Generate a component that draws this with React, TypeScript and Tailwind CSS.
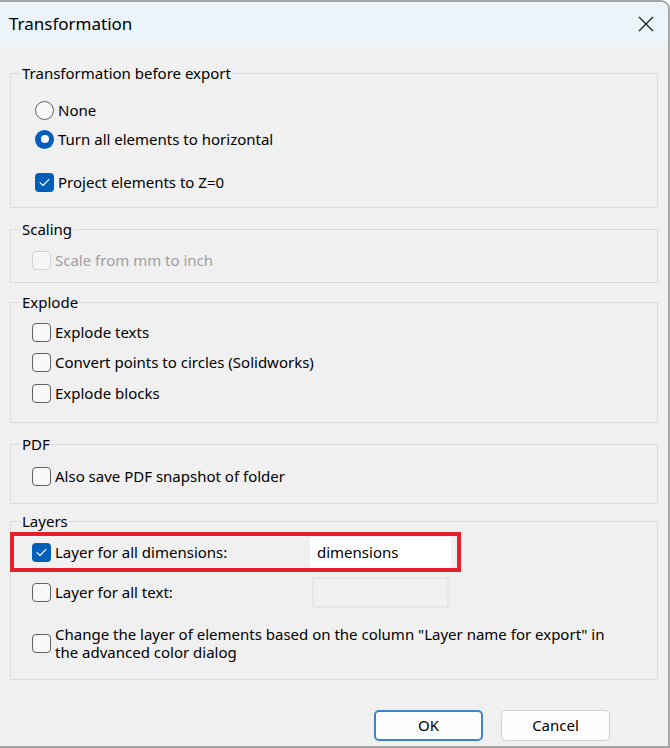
import { ReactNode } from 'react'

const FONT = '"Segoe UI", "Noto Sans", "Liberation Sans", sans-serif'

function Check({ checked = false, disabled = false }: { checked?: boolean; disabled?: boolean }) {
  if (checked) {
    return (
      <span className="flex h-[19px] w-[19px] shrink-0 items-center justify-center rounded-[4px] bg-[#005fb8]">
        <svg width="11" height="9" viewBox="0 0 11 9" fill="none">
          <path d="M1 4.6 L4 7.5 L10 1.3" stroke="white" strokeWidth="1.1" strokeLinecap="round" strokeLinejoin="round" />
        </svg>
      </span>
    )
  }
  return (
    <span
      className={
        disabled
          ? 'h-[19px] w-[19px] shrink-0 rounded-[4px] border border-[#d4d4d4] bg-[#f5f5f5]'
          : 'h-[19px] w-[19px] shrink-0 rounded-[4px] border border-[#616161] bg-[#f8f8f8]'
      }
    />
  )
}

function Radio({ checked = false }: { checked?: boolean }) {
  if (checked) {
    return (
      <span className="flex h-[19px] w-[19px] shrink-0 items-center justify-center rounded-full bg-[#005fb8]">
        <span className="h-[8px] w-[8px] rounded-full bg-white" />
      </span>
    )
  }
  return <span className="h-[19px] w-[19px] shrink-0 rounded-full border border-[#616161] bg-[#f8f8f8]" />
}

function Group({ title, className, children }: { title: string; className: string; children: ReactNode }) {
  return (
    <fieldset className={`mx-[10px] border border-[#dcdcdc] ${className}`}>
      <legend className="ml-[10px] px-[1px] text-[15px] leading-[20px]">{title}</legend>
      {children}
    </fieldset>
  )
}

function Row({ children, className = '' }: { children: ReactNode; className?: string }) {
  return <div className={`flex h-[24px] items-center gap-[4px] ${className}`}>{children}</div>
}

export default function App() {
  return (
    <div
      className="flex h-[748px] w-[670px] flex-col overflow-hidden rounded-tr-[9px] border-t-2 border-r-2 border-b-2 border-[#a6a6a6] bg-[#f0f0f0] text-[15px] text-black"
      style={{ fontFamily: FONT }}
    >
      {/* title bar */}
      <div className="flex h-[44px] shrink-0 items-center justify-between bg-[#ebf4f9] pl-[9px] pr-[14px]">
        <span className="text-[17px]">Transformation</span>
        <svg width="16" height="16" viewBox="0 0 16 16" fill="none">
          <path d="M1 1 L15 15 M15 1 L1 15" stroke="#1a1a1a" strokeWidth="1.2" />
        </svg>
      </div>

      <Group title="Transformation before export" className="mt-[17px] pb-[13px] pt-[15px]">
        <div className="pl-[24px]">
          <Row>
            <Radio />
            <span>None</span>
          </Row>
          <Row className="mt-[5px]">
            <Radio checked />
            <span>Turn all elements to horizontal</span>
          </Row>
          <Row className="mt-[19px]">
            <Check checked />
            <span>Project elements to Z=0</span>
          </Row>
        </div>
      </Group>

      <Group title="Scaling" className="mt-[11px] pb-[10px] pt-[9px]">
        <div className="pl-[21px]">
          <Row>
            <Check disabled />
            <span className="text-[#a0a0a0]">Scale from mm to inch</span>
          </Row>
        </div>
      </Group>

      <Group title="Explode" className="mt-[9px] pb-[17px] pt-[8px]">
        <div className="flex flex-col gap-[6.5px] pl-[21px]">
          <Row>
            <Check />
            <span>Explode texts</span>
          </Row>
          <Row>
            <Check />
            <span>Convert points to circles (Solidworks)</span>
          </Row>
          <Row>
            <Check />
            <span>Explode blocks</span>
          </Row>
        </div>
      </Group>

      <Group title="PDF" className="mt-[11px] pb-[15px] pt-[10px]">
        <div className="pl-[21px]">
          <Row>
            <Check />
            <span>Also save PDF snapshot of folder</span>
          </Row>
        </div>
      </Group>

      <Group title="Layers" className="mt-[7px] pb-[18px] pt-[1px]">
        <div className="-ml-[1px] mr-[196px] flex h-[40px] items-center border-[4px] border-[#e5202a] pl-[18px] pr-[6px]">
          <Check checked />
          <span className="ml-[4px] w-[255px]">Layer for all dimensions:</span>
          <div className="flex h-[31px] flex-1 items-center bg-white pl-[7px]">dimensions</div>
        </div>
        <div className="mt-[4px] flex h-[32px] items-center pl-[21px]">
          <Check />
          <span className="ml-[4px] w-[257px]">Layer for all text:</span>
          <div className="h-[31px] w-[137px] border-2 border-[#e6e6e6]" />
        </div>
        <div className="mt-[17px] flex items-center pl-[21px] pr-[36px]">
          <Check />
          <span className="ml-[4px] leading-[18px]">
            Change the layer of elements based on the column "Layer name for export" in the advanced color dialog
          </span>
        </div>
      </Group>

      <div className="mt-[30px] flex justify-end gap-[18px] pr-[58px]">
        <button className="h-[31px] w-[109px] rounded-[5px] border-2 border-[#3c84cf] bg-[#fdfdfd] text-[15px]">OK</button>
        <button className="h-[31px] w-[109px] rounded-[5px] border border-[#d0d0d0] bg-[#fdfdfd] text-[15px]">Cancel</button>
      </div>
    </div>
  )
}
